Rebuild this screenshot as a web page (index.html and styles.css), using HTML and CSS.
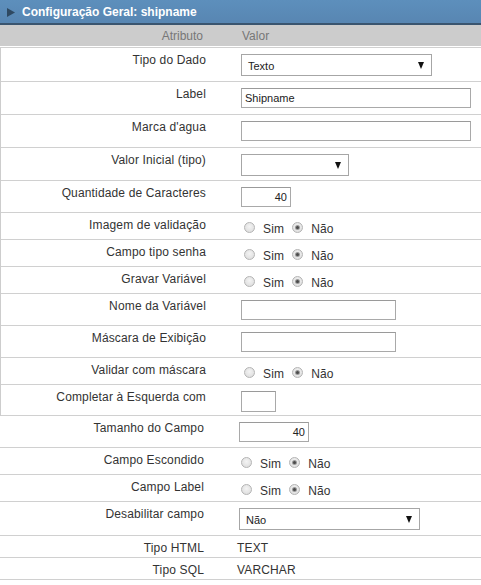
FILE: index.html
```html
<!DOCTYPE html>
<html lang="pt">
<head>
<meta charset="utf-8">
<title>Configuração Geral</title>
<link rel="stylesheet" href="styles.css">
</head>
<body>
<div class="panel">
  <div class="title">
    <svg class="tri" width="8" height="9" viewBox="0 0 8 9"><polygon points="0,0 8,4.5 0,9" fill="#2f4961"/></svg>
    <span>Configuração Geral: shipname</span>
  </div>
  <div class="colhead">
    <div class="ch-lbl">Atributo</div>
    <div class="ch-val">Valor</div>
  </div>

  <div class="grid g1">
    <div class="row h34">
      <div class="lbl">Tipo do Dado</div>
      <div class="val"><div class="sel w190"><span class="sel-text">Texto</span><svg class="arr" width="6" height="7" viewBox="0 0 6 7"><polygon points="0,0 6,0 3,7" fill="#111"/></svg></div></div>
    </div>
    <div class="row h33">
      <div class="lbl">Label</div>
      <div class="val"><div class="inp w230">Shipname</div></div>
    </div>
    <div class="row h33">
      <div class="lbl">Marca d'agua</div>
      <div class="val"><div class="inp w230"></div></div>
    </div>
    <div class="row h33">
      <div class="lbl">Valor Inicial (tipo)</div>
      <div class="val"><div class="sel w108"><span class="sel-text"></span><svg class="arr" width="6" height="7" viewBox="0 0 6 7"><polygon points="0,0 6,0 3,7" fill="#111"/></svg></div></div>
    </div>
    <div class="row h32">
      <div class="lbl">Quantidade de Caracteres</div>
      <div class="val"><div class="inp w50 num">40</div></div>
    </div>
    <div class="row h27">
      <div class="lbl">Imagem de validação</div>
      <div class="val radios"><span class="radio"></span><span class="rl">Sim</span><span class="radio on"></span><span class="rl">Não</span></div>
    </div>
    <div class="row h27">
      <div class="lbl">Campo tipo senha</div>
      <div class="val radios"><span class="radio"></span><span class="rl">Sim</span><span class="radio on"></span><span class="rl">Não</span></div>
    </div>
    <div class="row h27">
      <div class="lbl">Gravar Variável</div>
      <div class="val radios"><span class="radio"></span><span class="rl">Sim</span><span class="radio on"></span><span class="rl">Não</span></div>
    </div>
    <div class="row h32">
      <div class="lbl">Nome da Variável</div>
      <div class="val"><div class="inp w155"></div></div>
    </div>
    <div class="row h32">
      <div class="lbl">Máscara de Exibição</div>
      <div class="val"><div class="inp w155"></div></div>
    </div>
    <div class="row h27">
      <div class="lbl">Validar com máscara</div>
      <div class="val radios"><span class="radio"></span><span class="rl">Sim</span><span class="radio on"></span><span class="rl">Não</span></div>
    </div>
    <div class="row h31">
      <div class="lbl">Completar à Esquerda com</div>
      <div class="val"><div class="inp w35 tall"></div></div>
    </div>
  </div>

  <div class="grid g2">
    <div class="row h32">
      <div class="lbl">Tamanho do Campo</div>
      <div class="val"><div class="inp w70 num">40</div></div>
    </div>
    <div class="row h27">
      <div class="lbl">Campo Escondido</div>
      <div class="val radios"><span class="radio"></span><span class="rl">Sim</span><span class="radio on"></span><span class="rl">Não</span></div>
    </div>
    <div class="row h27">
      <div class="lbl">Campo Label</div>
      <div class="val radios"><span class="radio"></span><span class="rl">Sim</span><span class="radio on"></span><span class="rl">Não</span></div>
    </div>
    <div class="row h34">
      <div class="lbl">Desabilitar campo</div>
      <div class="val"><div class="sel w181"><span class="sel-text">Não</span><svg class="arr" width="6" height="7" viewBox="0 0 6 7"><polygon points="0,0 6,0 3,7" fill="#111"/></svg></div></div>
    </div>
    <div class="row h22">
      <div class="lbl">Tipo HTML</div>
      <div class="val txt">TEXT</div>
    </div>
    <div class="row h22">
      <div class="lbl">Tipo SQL</div>
      <div class="val txt">VARCHAR</div>
    </div>
  </div>
</div>
</body>
</html>
```

FILE: styles.css
```css
* { box-sizing: border-box; }

html, body {
  margin: 0;
  padding: 0;
  background: #ffffff;
}

body {
  font-family: "Liberation Sans", Arial, sans-serif;
  font-size: 12px;
  color: #333333;
}

.panel {
  width: 481px;
}

.title {
  height: 25px;
  background: linear-gradient(#5d8fbc, #5886b2);
  border-bottom: 2px solid #3a556f;
  display: flex;
  align-items: center;
  padding-left: 7px;
  gap: 7px;
  color: #ffffff;
  font-weight: bold;
  font-size: 12px;
}

.tri {
  display: block;
  margin-top: 1px;
}

.colhead {
  height: 22px;
  background: #cccccc;
  border-bottom: 1px solid #ffffff;
  display: grid;
  grid-template-columns: 210px 1fr;
  color: #777777;
  line-height: 14px;
}

.ch-lbl {
  text-align: right;
  padding: 4px 7px 0 0;
}

.ch-val {
  padding: 4px 0 0 32px;
}

.grid {
  border-top: 1px solid #d0d0d0;
}

.g1 {
  border-left: 1px solid #cdcdcd;
}

.g2 {
  border-top: none;
}

.row {
  display: grid;
  grid-template-columns: 209px 1fr;
  border-bottom: 1px solid #d0d0d0;
}

.g2 .row {
  grid-template-columns: 210px 1fr;
}

.h34 { height: 34px; }
.h33 { height: 33px; }
.h32 { height: 32px; }
.h31 { height: 31px; }
.h27 { height: 27px; }
.h22 { height: 22px; }

.lbl {
  text-align: right;
  padding: 5px 4px 0 0;
  line-height: 14px;
  white-space: nowrap;
  letter-spacing: 0.15px;
}

.g2 .lbl {
  padding-right: 6px;
}

.val {
  padding: 6px 0 0 31px;
}

.g2 .val {
  padding-left: 29px;
}

.val.txt {
  padding-top: 5px;
  padding-left: 27px;
  line-height: 14px;
  letter-spacing: 0.15px;
}

.inp {
  height: 20px;
  border: 1px solid #a9a9a9;
  border-top-color: #9a9a9a;
  background: #ffffff;
  font-size: 11px;
  line-height: 18px;
  padding: 0 3px;
  color: #222222;
}

.inp.num {
  text-align: right;
  padding-right: 3px;
}

.inp.tall {
  height: 21px;
}

.w230 { width: 230px; }
.w155 { width: 155px; }
.w50 { width: 50px; }
.w35 { width: 35px; }
.w70 { width: 70px; }

.sel {
  height: 22px;
  border: 1px solid #a6a6a6;
  background: #ffffff;
  display: flex;
  align-items: center;
  justify-content: space-between;
  padding: 0 7px 0 6px;
  font-size: 11px;
  color: #222222;
}

.sel-text {
  padding-top: 1px;
}

.arr {
  display: block;
}

.w190 { width: 191px; }
.w108 { width: 108px; }
.w181 { width: 181px; }

.radios {
  display: flex;
  align-items: center;
  padding-top: 4px;
  padding-left: 34px;
  height: 24px;
  align-self: start;
  font-size: 12px;
}

.g2 .radios {
  padding-left: 31px;
}

.radio {
  width: 11px;
  height: 11px;
  border-radius: 50%;
  border: 1px solid #b4b4b4;
  background: radial-gradient(circle at 50% 40%, #f4f4f4, #d9d9d9);
  position: relative;
  display: inline-block;
  flex: none;
}

.radio.on::after {
  content: "";
  position: absolute;
  left: 3px;
  top: 3px;
  width: 3px;
  height: 3px;
  border-radius: 50%;
  background: #4a4a4a;
  box-shadow: 0 0 0 1px #9a9a9a;
}

.rl {
  margin: 3px 8px 0 8px;
  line-height: 14px;
  letter-spacing: 0.15px;
}
```
